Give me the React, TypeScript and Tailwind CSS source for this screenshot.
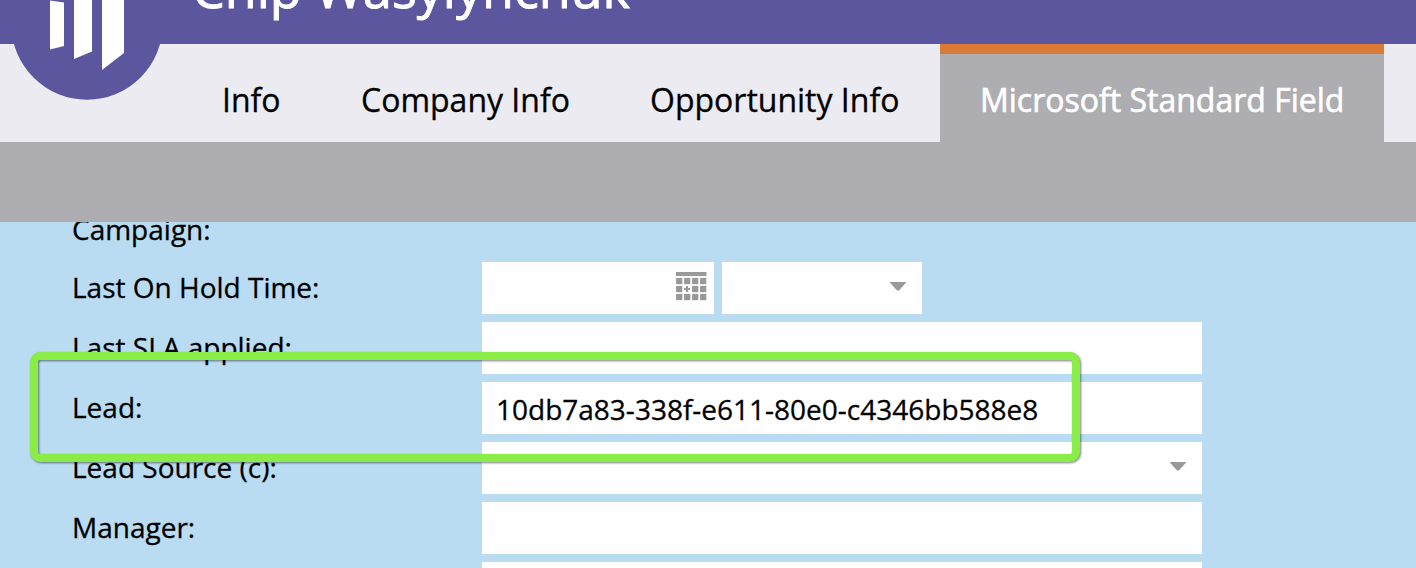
function CalendarIcon() {
  const cells: [number, number][] = [];
  for (let row = 0; row < 3; row++) {
    for (let col = 0; col < 4; col++) {
      if (!(row === 1 && col === 1)) cells.push([col, row]);
    }
  }
  return (
    <svg width="31" height="29" viewBox="0 0 31 29" fill="#999999" aria-hidden="true">
      <rect x="0" y="0" width="30.5" height="4" />
      {cells.map(([col, row]) => (
        <rect key={`${col}-${row}`} x={col * 8 + 0.1} y={5.9 + row * 8} width="6.2" height="6.3" />
      ))}
      <path d="M10 14h2v2h2v2h-2v2h-2v-2h-2v-2h2z" />
    </svg>
  );
}

function Caret() {
  return (
    <svg width="18" height="9" viewBox="0 0 18 9" fill="#999999" aria-hidden="true">
      <path d="M0.5 0H17.5L10 8.5H8Z" />
    </svg>
  );
}

function Logo() {
  return (
    <svg className="absolute left-[11px] top-[-52px]" width="152" height="152" viewBox="0 0 152 152" aria-hidden="true">
      <circle cx="76" cy="76" r="75.7" fill="#5b569e" />
      <g fill="#ffffff">
        <path d="M39 52.5L53 54.5V98L39 101.5Z" />
        <path d="M63 40L81 44V103.5L63 111Z" />
        <path d="M91 30L113 40V105L91 122Z" />
      </g>
    </svg>
  );
}

function Label({ children }: { children: string }) {
  return <label className="w-[410px] shrink-0 whitespace-nowrap text-[28px] leading-[50px]">{children}</label>;
}

function Row({ label, value, select }: { label: string; value?: string; select?: boolean }) {
  return (
    <div className="flex h-[52px] shrink-0">
      <Label>{label}</Label>
      <div className="flex w-[720px] justify-between bg-white pl-[14px] pr-[15px]">
        <span className="pt-px text-[28px] leading-[52px]">{value}</span>
        {select && (
          <span className="pt-5">
            <Caret />
          </span>
        )}
      </div>
    </div>
  );
}

export default function App() {
  return (
    <div className="relative flex h-[568px] w-[1416px] flex-col overflow-hidden bg-[#b9dcf2] font-['Open_Sans',sans-serif] text-black [-webkit-text-stroke:0.3px_currentColor]">
      <header className="flex h-11 shrink-0 items-end bg-[#5b569e] pl-[192px]">
        <h1 className="mb-[21px] whitespace-nowrap text-[52px] font-normal leading-[70px] text-white [-webkit-text-stroke:0.9px_currentColor]">
          Chip Wasylynchuk
        </h1>
      </header>
      <nav className="flex h-[98px] shrink-0 bg-[#ecebf1] pl-[182px] text-[32px] leading-[44px]">
        <div className="w-[139px] whitespace-nowrap pl-10 pt-[34px]">Info</div>
        <div className="w-[289px] whitespace-nowrap pl-10 pt-[34px]">Company Info</div>
        <div className="w-[330px] whitespace-nowrap pl-10 pt-[34px]">Opportunity Info</div>
        <div className="w-[444px] whitespace-nowrap border-t-[10px] border-[#d97b35] bg-[#aeadb2] pl-10 pt-6 text-white [-webkit-text-stroke:0.6px_currentColor]">
          Microsoft Standard Field
        </div>
      </nav>
      <Logo />
      <div className="h-20 shrink-0 bg-[#aeadb2]" />
      <main className="flex h-[346px] flex-col gap-2 overflow-hidden pl-[72px]">
        <div className="flex h-8 shrink-0 items-end">
          <Label>Campaign:</Label>
        </div>
        <div className="flex h-[52px] shrink-0">
          <Label>Last On Hold Time:</Label>
          <div className="mr-2 flex w-[232px] justify-end bg-white pr-[7px] pt-[10px]">
            <CalendarIcon />
          </div>
          <div className="flex w-[200px] justify-end bg-white pr-[15px] pt-5">
            <Caret />
          </div>
        </div>
        <Row label="Last SLA applied:" />
        <Row label="Lead:" value="10db7a83-338f-e611-80e0-c4346bb588e8" />
        <Row label="Lead Source (c):" select />
        <Row label="Manager:" />
        <Row label="" />
      </main>
      <div className="absolute left-[30px] top-[352px] h-[110px] w-[1050px] rounded-[10px] border-8 border-[#89ec47] drop-shadow-[1px_1px_1px_rgba(0,0,0,0.5)]" />
    </div>
  );
}
